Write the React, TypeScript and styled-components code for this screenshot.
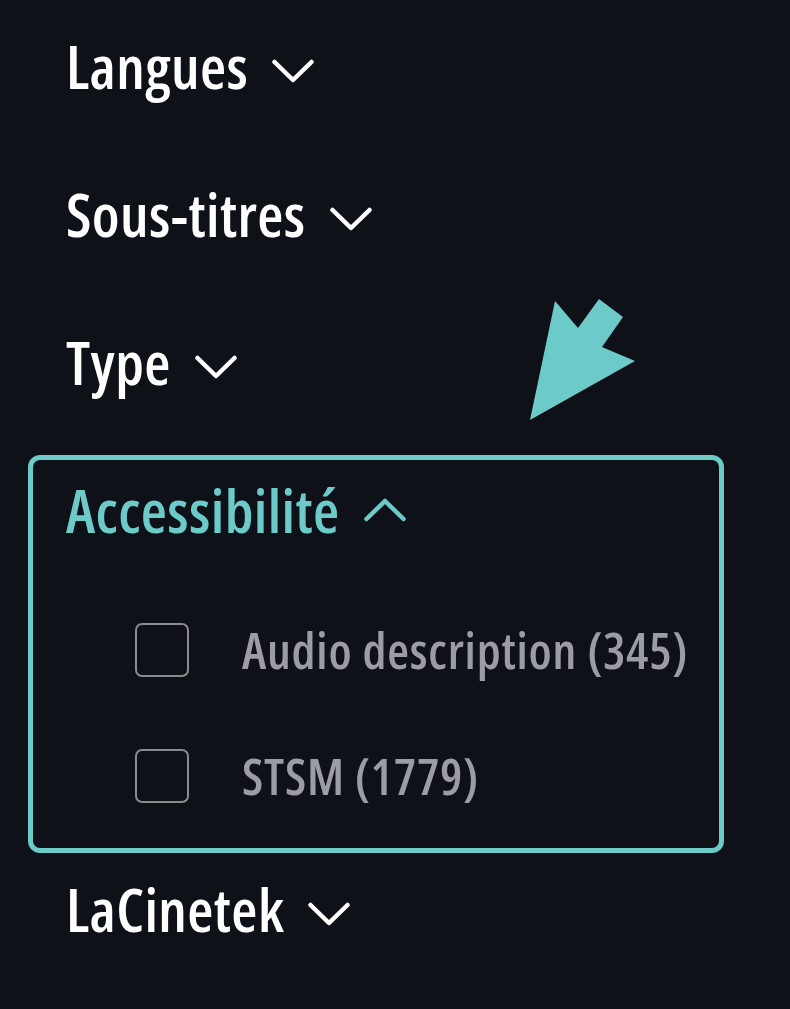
import React from "react";
import styled, { createGlobalStyle } from "styled-components";

const teal = "#6ccbc8";

const GlobalStyle = createGlobalStyle`
  html, body {
    margin: 0;
    padding: 0;
    background: #0e1118;
  }
  body {
    font-family: "Open Sans", "Liberation Sans", sans-serif;
    font-stretch: 75%;
  }
`;

const Page = styled.div`
  position: relative;
  width: 790px;
  height: 1009px;
  box-sizing: border-box;
  padding: 36px 0 0 28px;
  display: flex;
  flex-direction: column;
  gap: 88px;
`;

const Heading = styled.button<{ $active?: boolean }>`
  display: flex;
  align-items: center;
  gap: 24px;
  padding: 0 0 0 38px;
  margin: 0;
  border: 0;
  background: none;
  font-family: inherit;
  font-stretch: inherit;
  font-weight: 550;
  font-size: 60px;
  line-height: 60px;
  height: 60px;
  letter-spacing: 0.4px;
  color: ${({ $active }) => ($active ? teal : "#ffffff")};
  text-align: left;
  cursor: pointer;
  & svg {
    flex: none;
  }
`;

const Box = styled.section`
  width: 696px;
  box-sizing: border-box;
  border: 5px solid ${teal};
  border-radius: 12px;
  padding: 20px 0 45px 0;
  margin-top: -25px;
  margin-bottom: -62px;
  & > button {
    padding-left: 33px;
  }
`;

const Options = styled.ul`
  list-style: none;
  margin: 83px 0 0 0;
  padding: 0 0 0 102px;
  display: flex;
  flex-direction: column;
  gap: 72px;
`;

const Option = styled.li`
  display: flex;
  align-items: center;
  gap: 53px;
  height: 54px;
  font-size: 50px;
  line-height: 54px;
  font-weight: 600;
  letter-spacing: 0.8px;
  color: #9c9da4;
`;

const Check = styled.span`
  width: 54px;
  height: 54px;
  box-sizing: border-box;
  border: 2px solid #8b8b8f;
  border-radius: 7px;
  flex: none;
`;

const Arrow = styled.svg`
  position: absolute;
  left: 0;
  top: 0;
  pointer-events: none;
`;

const ChevronSvg = styled.svg<{ $up?: boolean }>`
  transform: translateY(${({ $up }) => ($up ? "0" : "5px")});
`;

const Chevron: React.FC<{ up?: boolean; color: string }> = ({ up, color }) => (
  <ChevronSvg $up={up} width="42" height="26" viewBox="0 0 42 26">
    <polyline
      points={up ? "2.5,22 21,4 39.5,22" : "2.5,4 21,22 39.5,4"}
      fill="none"
      stroke={color}
      strokeWidth="4.5"
      strokeLinecap="round"
      strokeLinejoin="round"
    />
  </ChevronSvg>
);

const Filter: React.FC<{ label: string }> = ({ label }) => (
  <Heading>
    {label}
    <Chevron color="#ffffff" />
  </Heading>
);

const options = ["Audio description (345)", "STSM (1779)"];

export default function App() {
  return (
    <>
      <GlobalStyle />
      <Page>
        <Filter label="Langues" />
        <Filter label="Sous-titres" />
        <Filter label="Type" />
        <Box>
          <Heading $active>
            Accessibilité
            <Chevron up color={teal} />
          </Heading>
          <Options>
            {options.map((o) => (
              <Option key={o}>
                <Check />
                {o}
              </Option>
            ))}
          </Options>
        </Box>
        <Filter label="LaCinetek" />
        <Arrow width="790" height="1009" viewBox="0 0 790 1009">
          <polygon
            points="530,420 555,301 578,328 599,299 623,317 602,347 635,361"
            fill={teal}
          />
        </Arrow>
      </Page>
    </>
  );
}
